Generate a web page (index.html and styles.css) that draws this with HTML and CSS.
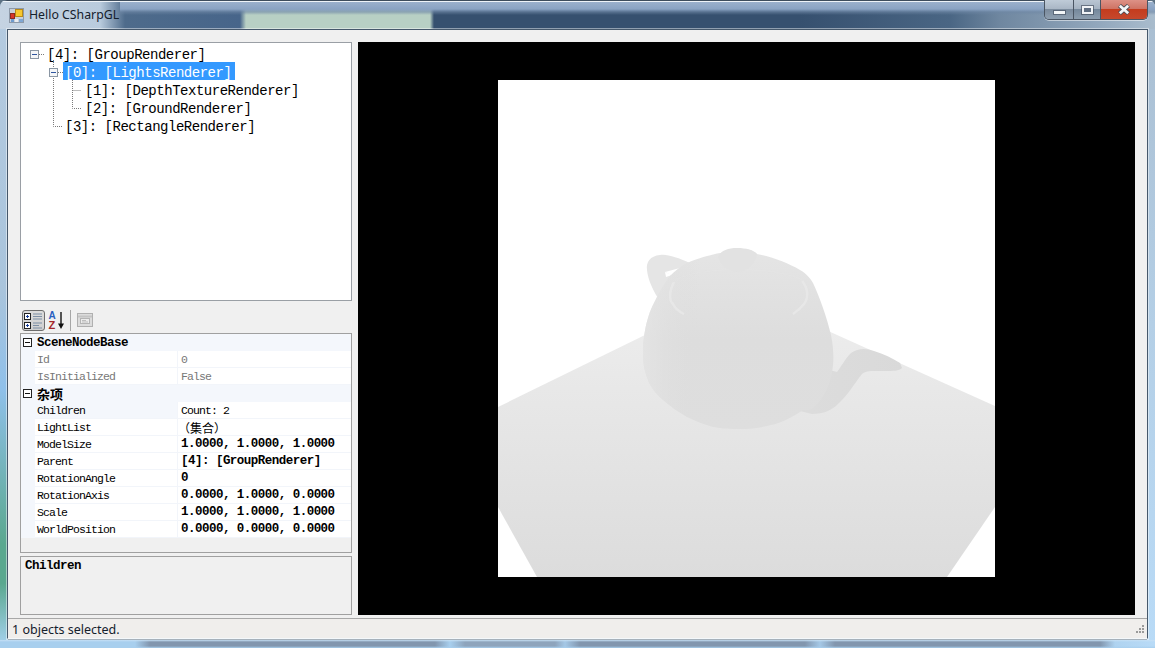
FILE: index.html
```html
<!DOCTYPE html>
<html lang="en">
<head>
<meta charset="utf-8">
<title>Hello CSharpGL</title>
<link rel="stylesheet" href="styles.css">
</head>
<body>
<div class="window">
  <header class="titlebar">
    <svg class="app-icon" width="16" height="16" viewBox="0 0 16 16">
      <rect x="0.5" y="0.5" width="14" height="14" fill="#c9d0da" stroke="#8d99a8"/>
      <rect x="2" y="10" width="3" height="4" fill="#6f9ccf"/><rect x="6" y="11" width="3" height="3" fill="#e9edf2"/><rect x="10" y="11" width="4" height="3" fill="#7fa7d3"/>
      <rect x="1.5" y="5.5" width="4" height="5" fill="#d8352a" stroke="#8c2a22"/>
      <rect x="6.5" y="1.5" width="7" height="7" fill="#f6c72f" stroke="#b98a18"/>
    </svg>
    <span class="title-text">Hello CSharpGL</span>
    <div class="caption-buttons">
      <div class="cap cap-min"><span class="min-glyph"></span></div>
      <div class="cap cap-max"><span class="max-glyph"></span></div>
      <div class="cap cap-close">
        <svg width="14" height="11" viewBox="0 0 14 11"><path d="M2.5 1.5 L11.5 9.5 M11.5 1.5 L2.5 9.5" stroke="#4a4f58" stroke-width="4.4"/><path d="M2.8 1.8 L11.2 9.2 M11.2 1.8 L2.8 9.2" stroke="#f4f6f8" stroke-width="2.8"/></svg>
      </div>
    </div>
  </header>

  <div class="client">
    <div class="content">
      <aside class="side">
        <div class="tree">
          <svg class="tree-lines" width="330" height="100" viewBox="0 0 330 100">
            <g fill="none" stroke="#7a7a7a" stroke-dasharray="1 1">
              <path d="M18 11.500H24"/>
              <path d="M37 29.500H42"/>
              <path d="M32.500 17V83.500H41"/>
              <path d="M51.500 37V65.500H60"/>
              <path d="M51.500 47.500H60"/>
            </g>
            <g fill="#f4f6f8" stroke="#8a96a3">
              <rect x="9.500" y="7.500" width="8" height="8"/>
              <rect x="28.500" y="25.500" width="8" height="8"/>
            </g>
            <path d="M11 11.500H16M30 29.500H35" stroke="#2f56a0"/>
          </svg>
          <div class="node lvl0"><span>[4]: [GroupRenderer]</span></div>
          <div class="node lvl1 selected"><span>[0]: [LightsRenderer]</span></div>
          <div class="node lvl2"><span>[1]: [DepthTextureRenderer]</span></div>
          <div class="node lvl2"><span>[2]: [GroundRenderer]</span></div>
          <div class="node lvl1"><span>[3]: [RectangleRenderer]</span></div>
        </div>

        <div class="toolbar">
          <div class="tool tool-active">
            <svg width="19" height="17" viewBox="0 0 19 17">
              <g fill="#fff" stroke="#222"><rect x="0.5" y="1.5" width="6" height="6"/><rect x="0.5" y="10.5" width="6" height="6"/></g>
              <path d="M2 4.5H5M3.5 3V6M2 13.5H5M3.5 12V15" stroke="#1a3f9a"/>
              <path d="M9 2H18M9 4.500H18M9 7H18M9 11H18M9 13.500H15M9 16H18" stroke="#7d8fa5"/>
            </svg>
          </div>
          <svg class="tool-sort" width="17" height="20" viewBox="0 0 17 20">
            <text x="0.500" y="9" class="sort-a">A</text>
            <text x="0.500" y="19" class="sort-z">Z</text>
            <path d="M13 2V15" stroke="#111" stroke-width="1.400"/><path d="M10 13.500H16L13 19Z" fill="#111"/>
          </svg>
          <div class="tool-sep"></div>
          <svg class="tool-pages" width="16" height="16" viewBox="0 0 16 16">
            <rect x="0.500" y="1.500" width="15" height="13" fill="#dcdcdc" stroke="#b0b0b0"/>
            <path d="M1 4.500H15" stroke="#c4c4c4" stroke-width="2"/>
            <rect x="3.500" y="6.500" width="9" height="5" fill="#ececec" stroke="#b4b4b4"/>
            <path d="M5 8.500H9M5 10H11" stroke="#bdbdbd"/>
          </svg>
        </div>

        <div class="grid">
          <div class="cat"><span class="cat-box"></span><span class="cat-label">SceneNodeBase</span></div>
          <div class="row off"><span class="gutter"></span><span class="name">Id</span><span class="val">0</span></div>
          <div class="row off"><span class="gutter"></span><span class="name">IsInitialized</span><span class="val">False</span></div>
          <div class="cat"><span class="cat-box"></span><span class="cat-label cjk">杂项</span></div>
          <div class="row active"><span class="gutter"></span><span class="name">Children</span><span class="val">Count: 2</span></div>
          <div class="row"><span class="gutter"></span><span class="name">LightList</span><span class="val cjk-val"><span class="cjk-inner">（集合）</span></span></div>
          <div class="row"><span class="gutter"></span><span class="name">ModelSize</span><span class="val strong">1.0000, 1.0000, 1.0000</span></div>
          <div class="row"><span class="gutter"></span><span class="name">Parent</span><span class="val strong">[4]: [GroupRenderer]</span></div>
          <div class="row"><span class="gutter"></span><span class="name">RotationAngle</span><span class="val strong">0</span></div>
          <div class="row"><span class="gutter"></span><span class="name">RotationAxis</span><span class="val strong">0.0000, 1.0000, 0.0000</span></div>
          <div class="row"><span class="gutter"></span><span class="name">Scale</span><span class="val strong">1.0000, 1.0000, 1.0000</span></div>
          <div class="row"><span class="gutter"></span><span class="name">WorldPosition</span><span class="val strong">0.0000, 0.0000, 0.0000</span></div>
        </div>

        <div class="desc"><span class="desc-title">Children</span></div>
      </aside>

      <main class="viewport">
        <svg class="scene" width="497" height="497" viewBox="498 80 497 497">
          <defs>
            <linearGradient id="ground" gradientUnits="userSpaceOnUse" x1="0" y1="330" x2="0" y2="577">
              <stop offset="0" stop-color="#ececec"/><stop offset="0.3" stop-color="#e7e7e7"/><stop offset="1" stop-color="#dcdcdc"/>
            </linearGradient>
            <linearGradient id="pot" gradientUnits="userSpaceOnUse" x1="0" y1="248" x2="0" y2="430">
              <stop offset="0" stop-color="#e5e5e5"/><stop offset="0.5" stop-color="#dddddd"/><stop offset="1" stop-color="#dedede"/>
            </linearGradient>
            <linearGradient id="spout" gradientUnits="userSpaceOnUse" x1="810" y1="0" x2="903" y2="0">
              <stop offset="0" stop-color="#dcdcdc"/><stop offset="1" stop-color="#d9d9d9"/>
            </linearGradient>
            <linearGradient id="edge" gradientUnits="userSpaceOnUse" x1="643" y1="0" x2="700" y2="0">
              <stop offset="0" stop-color="#e6e6e6" stop-opacity="0.700"/><stop offset="1" stop-color="#dcdcdc" stop-opacity="0"/>
            </linearGradient>
          </defs>
          <path fill="url(#ground)" d="M498 407L737 290L995 406V507L947 577H537L498 507Z"/>
          <path fill="#e5e5e5" d="M690 263C678 258 668 254 660 255C650 256 646 262 647 270C648 280 653 290 658 298L668 284L673 276L665 272L680 268Z"/>
          <path fill="#ffffff" d="M665 272L672 275L666 277Z"/>
          <path fill="url(#spout)" d="M812 414C824 414 832 410 838 404C848 395 854 384 862 374C866 370 874 371 885 371C893 371 899 371 902 368L900 363C892 358 884 354 874 351C866 348 858 348 851 353C845 359 841 367 837 372L826 369L795 395L800 411Z"/>
          <path fill="url(#pot)" d="M687 263C706 255 720 253 726 252C730 249 744 247 752 251L757 254C772 257 788 263 800 270C806 273 811 279 813 283C820 298 827 318 831 335C834 350 834 362 832 372C830 385 824 398 815 406C812 410 808 411 803 410C790 419 778 424 767 426C755 429 745 429 737 429C727 429 718 428 713 427C703 424 695 421 687 417C678 412 670 406 663 400C655 393 650 386 648 380C644 370 643 362 643 353C643 340 645 328 648 318C650 310 654 303 657 297C661 289 665 282 670 276C675 271 681 266 687 263Z"/>
          <path fill="url(#edge)" d="M687 263C706 255 720 253 726 252C730 249 744 247 752 251L757 254C772 257 788 263 800 270C806 273 811 279 813 283C820 298 827 318 831 335C834 350 834 362 832 372C830 385 824 398 815 406C812 410 808 411 803 410C790 419 778 424 767 426C755 429 745 429 737 429C727 429 718 428 713 427C703 424 695 421 687 417C678 412 670 406 663 400C655 393 650 386 648 380C644 370 643 362 643 353C643 340 645 328 648 318C650 310 654 303 657 297C661 289 665 282 670 276C675 271 681 266 687 263Z"/>
          <path fill="none" stroke="#e9e9e9" stroke-width="2.500" stroke-opacity="0.700" d="M674 282C669 291 669 300 673 304C675 309 680 312 684 314"/>
          <path fill="none" stroke="#e9e9e9" stroke-width="2.500" stroke-opacity="0.700" d="M802 281C809 289 808 299 804 304C800 309 796 312 793 314"/>
          <path fill="none" stroke="#e8e8e8" stroke-width="1.500" stroke-opacity="0.250" d="M675 280C700 266 775 266 802 280"/>
          <path fill="#e2e2e2" d="M718 257C720 251 728 248 737 248C746 248 754 250 757 254C756 262 748 272 737 272C728 272 720 265 718 257Z"/>
        </svg>
      </main>
    </div>

    <footer class="statusbar">
      <span class="status-text">1 objects selected.</span>
      <svg class="grip" width="12" height="12" viewBox="0 0 12 12">
        <g fill="#9a9a9a"><rect x="9" y="0" width="2" height="2"/><rect x="6" y="3" width="2" height="2"/><rect x="9" y="3" width="2" height="2"/><rect x="3" y="6" width="2" height="2"/><rect x="6" y="6" width="2" height="2"/><rect x="9" y="6" width="2" height="2"/></g>
      </svg>
    </footer>
  </div>
  <div class="frame-bottom"></div>
</div>
</body>
</html>
```
FILE: styles.css
```css
html, body {
  margin: 0;
  padding: 0;
  background: #5d7284;
}
body {
  width: 1155px;
  height: 648px;
  overflow: hidden;
}
.window {
  width: 1155px;
  height: 648px;
  box-sizing: border-box;
  display: flex;
  flex-direction: column;
  padding: 0;
  border-radius: 7px 7px 0 0;
  overflow: hidden;
  background:
    linear-gradient(to bottom, #b5cbe0 0, #a9c4dc 45%, #8fc0ea 60%, #5aa88f 84%, #5aa88f 90%, #a9d3f2 100%) left / 8px 100% no-repeat,
    linear-gradient(to bottom, #a9bdd0 0, #b4cfe6 50%, #b9dbf7 100%) right / 8px 100% no-repeat;
}
.titlebar {
  height: 29px;
  flex: none;
  display: flex;
  align-items: flex-start;
  box-sizing: border-box;
  padding: 0 7px 0 9px;
  border-top: 1px solid #3d4c5c;
  box-shadow: inset 0 1px 0 #eef3f8;
  background:
    linear-gradient(to bottom, #9db2cd 0, #8aa3c3 8px, rgba(110,135,165,0.6) 11px, rgba(110,135,165,0) 14px) 120px 0 / calc(100% - 120px) 14px no-repeat,
    linear-gradient(to right, #c5d3e2 0, #b9cbdd 100px, #4e6b8b 125px, #47658a 240px, #b8d0c4 246px, #b8d0c4 430px, #36506f 434px, #36506f 800px, #4a6684 950px, #6f87a0 1000px, #93a8bd 1100px, #a9bccd 1155px);
}
.app-icon {
  margin-top: 7px;
  flex: none;
}
.title-text {
  margin: 5px 0 0 4px;
  font: 12.300px/17px "Noto Sans", sans-serif;
  color: #14202c;
}
.caption-buttons {
  margin-left: auto;
  margin-top: -1px;
  display: flex;
  height: 20px;
  box-sizing: border-box;
  border: 1px solid #4a5563;
  border-top: 0;
  border-radius: 0 0 5px 5px;
  overflow: hidden;
  box-shadow: 0 1px 0 rgba(255,255,255,0.5);
}
.cap {
  display: flex;
  align-items: center;
  justify-content: center;
  box-sizing: border-box;
}
.cap-min {
  width: 29px;
  border-right: 1px solid #4a5563;
  background: linear-gradient(to bottom, #bfcbd8 0, #aab7c6 45%, #7b8b9d 50%, #8f9fb0 100%);
}
.cap-max {
  width: 27px;
  border-right: 1px solid #4a5563;
  background: linear-gradient(to bottom, #bac6d3 0, #a5b3c2 45%, #75889c 50%, #8c9dae 100%);
}
.cap-close {
  width: 46px;
  background: linear-gradient(to bottom, #dd9186 0, #cf7465 45%, #c43c1e 50%, #c5482c 100%);
}
.min-glyph {
  width: 11px;
  height: 3px;
  margin-top: 5px;
  background: #f4f6f8;
  box-shadow: 0 0 0 1px rgba(60,70,85,0.55);
}
.max-glyph {
  width: 7px;
  height: 4px;
  border: 2px solid #f0f3f6;
  background: #5e6d80;
  box-shadow: 0 0 0 1px rgba(60,70,85,0.6);
}
.client {
  flex: 1;
  min-height: 0;
  margin: 0 7px;
  display: flex;
  flex-direction: column;
  border: 1px solid #46586b;
  border-bottom-color: #f4f8fb;
  background: #f0f0f0;
  box-shadow: 0 0 0 1px rgba(255,255,255,0.45);
}
.content {
  flex: 1;
  min-height: 0;
  display: flex;
  gap: 6px;
  padding: 12px 12px 3px 12px;
}
.side {
  width: 332px;
  flex: none;
  display: flex;
  flex-direction: column;
}
.tree {
  position: relative;
  height: 259px;
  box-sizing: border-box;
  padding-top: 1px;
  border: 1px solid #9a9fa5;
  background: #fff;
  font: 14px/14px "Liberation Mono", "Noto Sans CJK SC", monospace;
  letter-spacing: -0.480px;
  color: #000;
}
.tree-lines {
  position: absolute;
  left: 0;
  top: 0;
}
.node {
  position: relative;
  height: 18px;
  white-space: nowrap;
}
.node span {
  display: inline-block;
  height: 18px;
  box-sizing: border-box;
  padding: 4px 4px 0 2px;
}
.lvl0 { padding-left: 24px; }
.lvl1 { padding-left: 42px; }
.lvl2 { padding-left: 62px; }
.selected span {
  background: #3399ff;
  color: #fff;
}
.toolbar {
  height: 32px;
  box-sizing: border-box;
  padding: 9px 0 0 2px;
  display: flex;
  align-items: flex-start;
}
.tool {
  display: flex;
  align-items: center;
  justify-content: center;
  box-sizing: border-box;
}
.tool-active {
  width: 23px;
  height: 21px;
  border: 1px solid #6d6d6d;
  border-radius: 3px;
  background: linear-gradient(to bottom, #dcdcdc, #cfcfcf);
}
.tool-sort {
  margin: 0 0 0 3px;
  flex: none;
}
.sort-a {
  font: bold 10px "Liberation Sans", sans-serif;
  fill: #2a5fc0;
}
.sort-z {
  font: bold 11px "Liberation Sans", sans-serif;
  fill: #a3262a;
}
.tool-sep {
  width: 1px;
  height: 21px;
  margin-left: 5px;
  background: #a6a6a6;
}
.tool-pages {
  margin: 2px 0 0 6px;
  flex: none;
}
.grid {
  height: 220px;
  box-sizing: border-box;
  border: 1px solid #a0a0a0;
  background: #f0f0f0;
  font: 11.500px/17px "Liberation Mono", "Noto Sans CJK SC", monospace;
  letter-spacing: -0.900px;
  color: #000;
}
.cat {
  height: 17px;
  display: flex;
  align-items: center;
  background: #f4f7fc;
}
.cat-box {
  position: relative;
  width: 9px;
  height: 9px;
  box-sizing: border-box;
  margin-left: 2px;
  border: 1px solid #222;
  background: #fff;
  flex: none;
}
.cat-box::after {
  content: "";
  position: absolute;
  left: 1px;
  right: 1px;
  top: 3px;
  height: 1px;
  background: #111;
}
.cat-label {
  margin: 2px 0 0 5px;
  font-weight: bold;
  font-size: 12.500px;
  letter-spacing: -0.500px;
}
.cat-label.cjk {
  margin-top: 0;
  font-family: "Noto Sans CJK SC", sans-serif;
  font-size: 13px;
  line-height: 16px;
  letter-spacing: 0;
}
.row {
  height: 17px;
  display: grid;
  grid-template-columns: 14px 142px 1fr;
  background: #fff;
  white-space: nowrap;
}
.gutter {
  background: #f4f7fc;
}
.name,
.val {
  box-sizing: border-box;
  border-bottom: 1px solid #f2f5fa;
  overflow: hidden;
}
.name {
  padding-left: 2px;
}
.val {
  padding-left: 3px;
  border-left: 1px solid #f2f5fa;
}
.off .name,
.off .val {
  color: #777777;
}
.active .name {
  background: #f4f7fc;
}
.strong {
  font-weight: bold;
  font-size: 12.500px;
  letter-spacing: -0.520px;
}
.cjk-val {
  font-family: "Noto Sans CJK SC", sans-serif;
  font-size: 12px;
  letter-spacing: 0;
}
.cjk-inner {
  margin-left: -3px;
}
.desc {
  height: 59px;
  margin-top: 3px;
  box-sizing: border-box;
  padding: 1px 4px;
  border: 1px solid #a0a0a0;
  background: #f0f0f0;
  font: bold 12.500px/16px "Liberation Mono", monospace;
  letter-spacing: -0.500px;
  color: #000;
}
.viewport {
  flex: 1;
  min-width: 0;
  display: flex;
  align-items: center;
  justify-content: center;
  background: #000;
}
.scene {
  display: block;
  background: #fff;
}
.statusbar {
  height: 20px;
  flex: none;
  box-sizing: border-box;
  display: flex;
  align-items: center;
  justify-content: space-between;
  padding: 0 2px 0 4px;
  border-top: 1px solid #a8a8a8;
  background: #f0eeec;
  font: 12.500px/18px "Noto Sans", sans-serif;
  color: #14202c;
}
.status-text {
  margin-top: 3px;
}
.grip {
  align-self: flex-end;
  margin-bottom: 1px;
}
.frame-bottom {
  height: 8px;
  flex: none;
  margin: 1px 0 0;
  background:
    linear-gradient(to bottom, #c6e0f5 0, rgba(198,224,245,0) 2px, rgba(168,207,238,0) 6px, #a8cfee 8px),
    linear-gradient(to right, #a8cfee 0, #a8cfee 135px, #8296ae 150px, #8296ae 435px, #a8cfee 450px, #8ea4bc 465px, #8ea4bc 555px, #a5c8e6 565px, #8296ae 580px, #8296ae 805px, #a5c8e6 820px, #8296ae 835px, #8296ae 1100px, #afd3f0 1115px, #b9dbf7 1155px);
}
```
